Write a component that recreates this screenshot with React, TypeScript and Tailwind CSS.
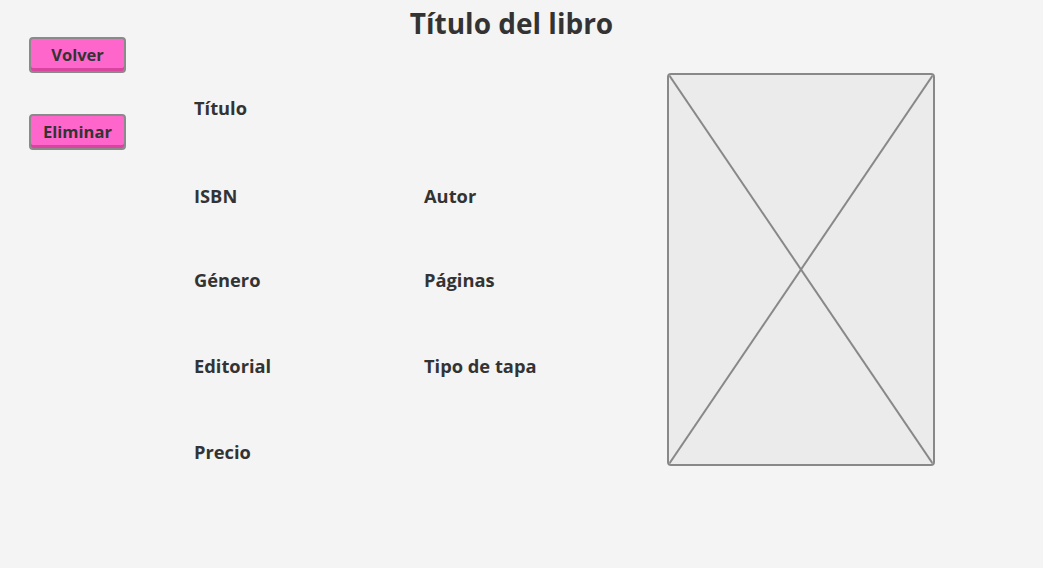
export default function App() {
  const rows: { h: string; a: string; b: string }[] = [
    { h: 'h-[88px]', a: 'Título', b: '' },
    { h: 'h-[84px]', a: 'ISBN', b: 'Autor' },
    { h: 'h-[86px]', a: 'Género', b: 'Páginas' },
    { h: 'h-[86px]', a: 'Editorial', b: 'Tipo de tapa' },
    { h: 'h-[40px]', a: 'Precio', b: '' },
  ]

  return (
    <div className="min-h-screen bg-[#f4f4f4] text-[#333333] font-['Open_Sans',sans-serif]">
      {/* Header */}
      <h1 className="h-[37px] pt-[4px] pr-[20px] text-center text-[28px] font-bold leading-[38px]">
        Título del libro
      </h1>

      <div className="flex">
        {/* Actions */}
        <div className="flex w-[194px] flex-col items-start gap-[41px] pl-[29px]">
          <button className="h-[36px] w-[97px] rounded-[4px] border-2 border-[#8a8a8a] bg-[#ff66cc] text-[16.5px] font-bold shadow-[inset_0_-3px_0_#d9449f]">
            Volver
          </button>
          <button className="h-[36px] w-[97px] rounded-[4px] border-2 border-[#8a8a8a] bg-[#ff66cc] text-[16.5px] font-bold shadow-[inset_0_-3px_0_#d9449f]">
            Eliminar
          </button>
        </div>

        {/* Fields */}
        <div className="flex w-[473px] flex-col pt-[59px]">
          {rows.map((r) => (
            <div key={r.a} className={`flex ${r.h}`}>
              <span className="w-[230px] text-[18.3px] font-bold leading-[24px]">{r.a}</span>
              <span className="w-[230px] text-[18.3px] font-bold leading-[24px]">{r.b}</span>
            </div>
          ))}
        </div>

        {/* Image placeholder */}
        <div className="mt-[36px] h-[393px] w-[268px] overflow-hidden rounded-[4px] border-2 border-[#888888] bg-[#ebebeb]">
          <svg className="h-full w-full" viewBox="0 0 100 100" preserveAspectRatio="none">
            <line x1="0" y1="0" x2="100" y2="100" stroke="#888888" strokeWidth="2" vectorEffect="non-scaling-stroke" />
            <line x1="100" y1="0" x2="0" y2="100" stroke="#888888" strokeWidth="2" vectorEffect="non-scaling-stroke" />
          </svg>
        </div>
      </div>
    </div>
  )
}
